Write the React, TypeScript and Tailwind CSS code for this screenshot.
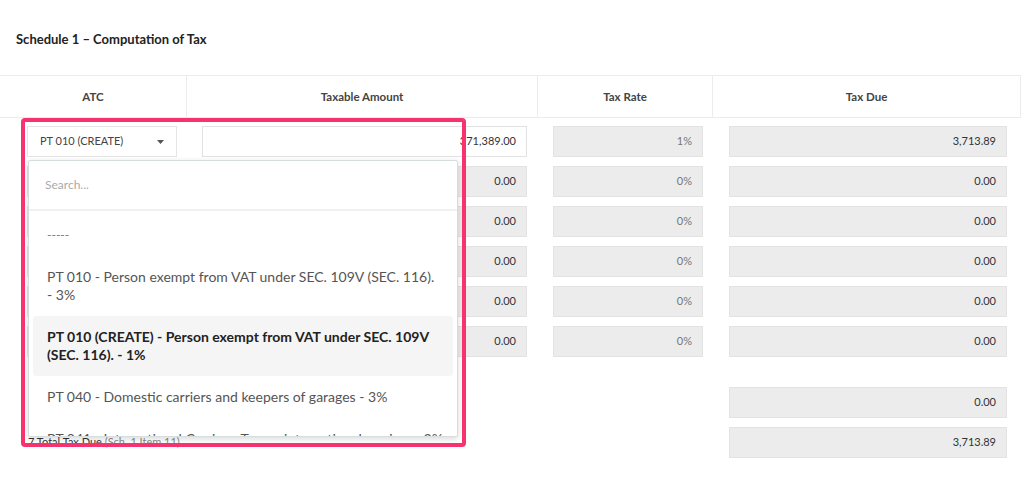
import React from "react";

const rows = [
  { amount: "371,389.00", rate: "1%", due: "3,713.89", first: true },
  { amount: "0.00", rate: "0%", due: "0.00" },
  { amount: "0.00", rate: "0%", due: "0.00" },
  { amount: "0.00", rate: "0%", due: "0.00" },
  { amount: "0.00", rate: "0%", due: "0.00" },
  { amount: "0.00", rate: "0%", due: "0.00" },
];

const options = [
  { label: "-----", dash: true },
  { label: "PT 010 - Person exempt from VAT under SEC. 109V (SEC. 116). - 3%" },
  { label: "PT 010 (CREATE) - Person exempt from VAT under SEC. 109V (SEC. 116). - 1%", selected: true },
  { label: "PT 040 - Domestic carriers and keepers of garages - 3%" },
  { label: "PT 041 - International Carriers: Tax on international carriers - 3%" },
];

const ReadOnlyBox = ({ value, light }: { value: string; light?: boolean }) => (
  <div
    className={`h-[31px] bg-[#ececec] border border-[#e2e2e2] flex items-center justify-end pr-[10px] text-[11px] ${
      light ? "text-[#777]" : "text-[#333]"
    }`}
  >
    {value}
  </div>
);

export default function App() {
  return (
    <div className="relative w-[1024px] h-[480px] bg-white overflow-hidden font-['Lato','Liberation_Sans',sans-serif]">
      {/* タイトル */}
      <div className="h-[75px] pl-4 pt-[30px]">
        <h2 className="text-[13px] font-bold text-[#222]">Schedule 1 – Computation of Tax</h2>
      </div>

      {/* ヘッダー */}
      <div className="flex h-[43px] border-y border-[#ececec] text-[11.5px] font-bold text-[#444] w-[1021px] border-r">
        <div className="w-[187px] flex items-center justify-center border-r border-[#ececec]">ATC</div>
        <div className="w-[351px] flex items-center justify-center border-r border-[#ececec]">Taxable Amount</div>
        <div className="w-[175px] flex items-center justify-center border-r border-[#ececec]">Tax Rate</div>
        <div className="flex-1 flex items-center justify-center">Tax Due</div>
      </div>

      {/* 行 */}
      <div className="pt-[8px] flex flex-col gap-[9px]">
        {rows.map((r, i) => (
          <div key={i} className="flex">
            <div className="w-[187px] pl-[27px] pr-[10px]">
              <div className="h-[31px] border border-[#e5e5e5] bg-white flex items-center justify-between pl-[12px] pr-[12px] text-[11px] text-[#444]">
                <span>{r.first ? "PT 010 (CREATE)" : ""}</span>
                <svg width="7" height="4" viewBox="0 0 7 4">
                  <path d="M0 0 L7 0 L3.5 4 Z" fill="#555" />
                </svg>
              </div>
            </div>
            <div className="w-[351px] pl-[15px] pr-[11px]">
              {r.first ? (
                <div className="h-[31px] border border-[#e2e2e2] bg-white flex items-center justify-end pr-[10px] text-[11px] text-[#333]">
                  {r.amount}
                </div>
              ) : (
                <ReadOnlyBox value={r.amount} />
              )}
            </div>
            <div className="w-[175px] pl-[15px] pr-[10px]">
              <ReadOnlyBox value={r.rate} light />
            </div>
            <div className="w-[307px] pl-[16px] pr-[13px]">
              <ReadOnlyBox value={r.due} />
            </div>
          </div>
        ))}
      </div>

      {/* 合計 */}
      <div className="pt-[30px] flex flex-col gap-[9px]">
        <div className="flex items-center">
          <div className="w-[713px]" />
          <div className="w-[307px] pl-[16px] pr-[13px]">
            <ReadOnlyBox value="0.00" />
          </div>
        </div>
        <div className="flex items-center">
          <div className="w-[713px] pl-[28px] text-[11px] text-[#333]">
            7 Total Tax Due <span className="text-[#888]">(Sch. 1 Item 11)</span>
          </div>
          <div className="w-[307px] pl-[16px] pr-[13px]">
            <ReadOnlyBox value="3,713.89" />
          </div>
        </div>
      </div>

      {/* ドロップダウン */}
      <div className="absolute left-[28px] top-[160px] w-[430px] h-[277px] bg-white border border-[#d6dddd] shadow-[0_2px_6px_rgba(0,0,0,0.15)] rounded-[2px] overflow-hidden z-10">
        <div className="h-[50px] border-b-2 border-[#f0f0f0] flex items-center pl-[16px] text-[12px] text-[#aaa]">
          Search...
        </div>
        <div className="pt-[3px]">
          {options.map((o, i) => (
            <div
              key={i}
              className={`py-3 leading-[18px] ${
                o.selected
                  ? "mx-[4px] pl-[14px] pr-[10px] bg-[#f5f5f5] rounded-[3px] font-bold text-[#222] text-[14px]"
                  : o.dash
                  ? "pl-[18px] text-[12px] text-[#777]"
                  : "pl-[18px] pr-[14px] text-[14px] text-[#555]"
              }`}
            >
              {o.label}
            </div>
          ))}
        </div>
      </div>

      {/* 注釈の枠 */}
      <div className="absolute left-[21px] top-[118px] w-[445px] h-[329px] border-[4px] border-[#f7336f] rounded-[4px] z-20" />
    </div>
  );
}
